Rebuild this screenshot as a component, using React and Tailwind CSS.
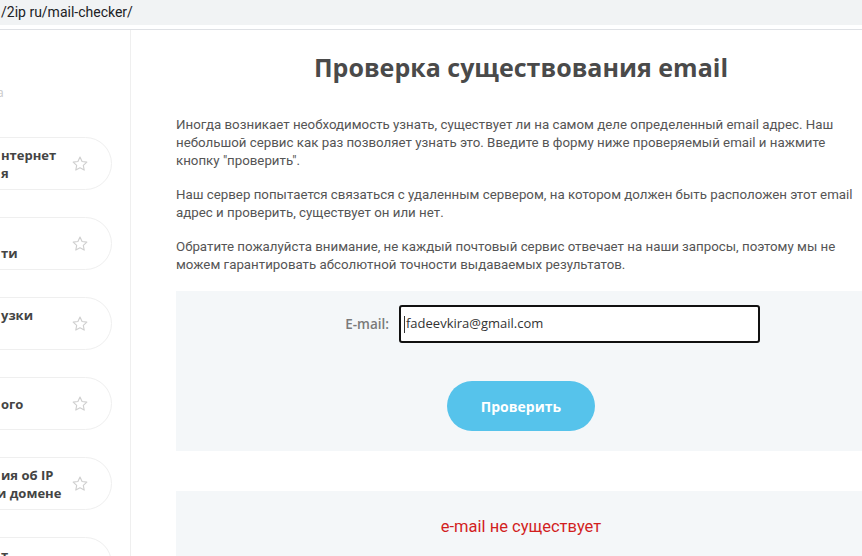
import React from "react";

function Star() {
  return (
    <svg width="18" height="18" viewBox="0 0 24 24" fill="none" stroke="#cfcfcf" strokeWidth="1.5" strokeLinejoin="round">
      <path d="M12 2.8l2.75 5.85 6.35.78-4.68 4.38 1.2 6.3L12 17.03l-5.62 3.08 1.2-6.3L2.9 9.43l6.35-.78L12 2.8z" />
    </svg>
  );
}

const items = [
  [["нтернет", 0], ["я", 0]],
  [["\u00a0", 0], ["ти", 0]],
  [["узки", 0], ["\u00a0", 0]],
  [["ого", 0]],
  [["ия об IP", 0], ["и домене", -4]],
  [["т", 0], ["\u00a0", 0]],
];

export default function App() {
  return (
    <div className="w-[862px] h-[556px] overflow-hidden bg-white" style={{ fontFamily: "'Open Sans', sans-serif" }}>
      <div className="h-[25px] bg-[#f1f3f4] flex items-center pl-[1px] text-[14px] text-[#202124]" style={{ fontFamily: "Roboto, sans-serif" }}>
        /2ip ru/mail-checker/
      </div>
      <div className="h-[5px] border-b border-[#dfe1e5]"></div>
      <div className="flex h-[527px]">
        <aside className="w-[131px] shrink-0 border-r border-[#efefef] overflow-hidden relative">
          <div className="h-[69px] flex items-end">
            <span className="text-[12px] text-[#c8c8c8] -ml-[3px] leading-none">а</span>
          </div>
          <div className="flex flex-col gap-[27px] pt-[38px]">
            {items.map((lines, i) => (
              <div key={i} className="-ml-[40px] w-[152px] h-[53px] shrink-0 rounded-full border border-[#efefef] bg-white flex items-center justify-between pr-[22px] pl-[40px]">
                <div className="text-[13px] font-bold leading-[18px] text-[#444] whitespace-nowrap">
                  {lines.map(([l, off], j) => (
                    <div key={j} style={off ? { marginLeft: off } : undefined}>{l}</div>
                  ))}
                </div>
                <Star />
              </div>
            ))}
          </div>
        </aside>
        <main className="flex-1 pl-[45px] overflow-hidden">
          <div className="w-[690px]">
            <h1 className="pt-[21px] text-center text-[25px] font-bold leading-[32px] text-[#4a4a4a]" style={{ fontFamily: "'Open Sans', sans-serif" }}>
              Проверка существования email
            </h1>
            <div className="mt-[33px] text-[13.3px] leading-[18px] text-[#555] flex flex-col gap-[16px]" style={{ fontFamily: "Roboto, sans-serif" }}>
              <p>Иногда возникает необходимость узнать, существует ли на самом деле определенный email адрес. Наш небольшой сервис как раз позволяет узнать это. Введите в форму ниже проверяемый email и нажмите кнопку "проверить".</p>
              <p>Наш сервер попытается связаться с удаленным сервером, на котором должен быть расположен этот email адрес и проверить, существует он или нет.</p>
              <p>Обратите пожалуйста внимание, не каждый почтовый сервис отвечает на наши запросы, поэтому мы не можем гарантировать абсолютной точности выдаваемых результатов.</p>
            </div>
            <div className="mt-[17px] w-[720px] h-[160px] bg-[#f4f7f9] pt-[14px]">
              <div className="flex items-center">
                <div className="w-[213px] text-right text-[13.5px] font-semibold text-[#7a7a7a]">E-mail:</div>
                <div className="ml-[10px] w-[361px] h-[38px] bg-white border-2 border-[#111] rounded-[3px] flex items-center pl-[3px] text-[13px] text-[#333]">
                  <span className="w-[1px] h-[17px] bg-[#333] mr-[1px]"></span>
                  fadeevkira@gmail.com
                </div>
              </div>
              <div className="flex justify-center mt-[38px] w-[690px]">
                <div className="w-[148px] h-[50px] rounded-full bg-[#56c3eb] flex items-center justify-center text-white text-[14px] font-bold">
                  Проверить
                </div>
              </div>
            </div>
            <div className="mt-[40px] w-[720px] h-[80px] bg-[#f4f7f9] pt-[24px]">
              <div className="w-[690px] text-center text-[16.5px] leading-[24px] text-[#d21f1f]" style={{ fontFamily: "Roboto, sans-serif" }}>
                e-mail не существует
              </div>
            </div>
          </div>
        </main>
      </div>
    </div>
  );
}
